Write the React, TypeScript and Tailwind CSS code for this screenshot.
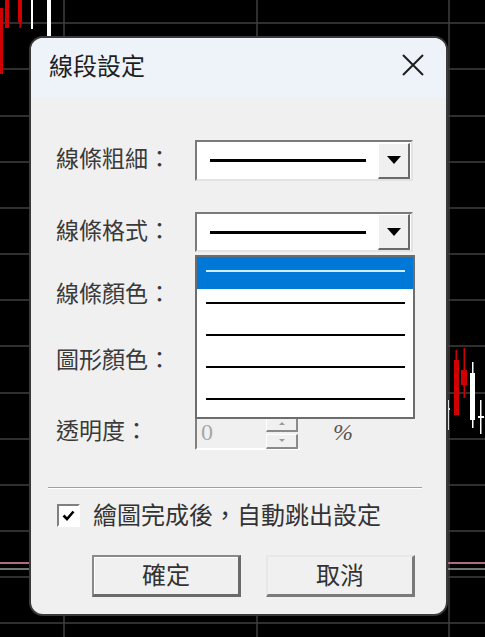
import React from "react";

const FONT = { fontFamily: '"Noto Sans CJK TC", "Noto Sans", sans-serif' };

// horizontal grid lines of the chart behind the dialog
const GRID_Y = [23, 69, 116, 162, 208, 254, 300, 346, 393, 439, 485, 531, 577, 623];
const GRID_X = [64, 257, 449];

function ChartBackground() {
    return (
        <svg className="absolute inset-0" width="485" height="637" viewBox="0 0 485 637">
            <rect width="485" height="637" fill="#000" />
            {GRID_Y.map(y => (
                <line key={y} x1="0" x2="485" y1={y} y2={y} stroke="#3f3f3f" strokeWidth="1.5" />
            ))}
            {GRID_X.map(x => (
                <line key={x} x1={x} x2={x} y1="0" y2="637" stroke="#3f3f3f" strokeWidth="1.5" />
            ))}
            <line x1="0" x2="485" y1="563" y2="563" stroke="#b06a85" strokeWidth="2" />
            <line x1="0" x2="485" y1="569" y2="569" stroke="#9a9a9a" strokeWidth="1.5" />
            {/* candles top-left */}
            <rect x="0" y="8" width="3" height="66" fill="#d00000" />
            <rect x="5" y="0" width="4" height="28" fill="#d00000" />
            <rect x="18" y="0" width="4" height="22" fill="#d00000" />
            <rect x="19.5" y="0" width="1.5" height="28" fill="#d00000" />
            <rect x="31" y="0" width="2" height="29" fill="#ffffff" />
            <rect x="47" y="0" width="4" height="40" fill="#ffffff" />
            {/* candles right */}
            <rect x="447" y="400" width="2" height="30" fill="#dddddd" />
            <rect x="444" y="408" width="6" height="2" fill="#dddddd" />
            <rect x="455.5" y="350" width="1.5" height="12" fill="#d00000" />
            <rect x="454" y="360" width="5" height="55" fill="#d00000" />
            <rect x="463.5" y="348" width="1.5" height="50" fill="#d00000" />
            <rect x="461" y="370" width="6" height="15" fill="#d00000" />
            <rect x="472" y="362" width="1.5" height="66" fill="#ffffff" />
            <rect x="470" y="373" width="5" height="47" fill="#ffffff" />
            <rect x="480" y="400" width="1.5" height="34" fill="#ffffff" />
            <rect x="478" y="416" width="6" height="2" fill="#ffffff" />
        </svg>
    );
}

function LineSample() {
    return <div className="h-[3px] w-[156px] bg-black" />;
}

function DropButton() {
    return (
        <div className="ml-auto flex h-[36px] w-[32px] items-center justify-center border-t border-l border-t-white border-l-white border-r-2 border-b-2 border-r-[#6a6a6a] border-b-[#6a6a6a] bg-[#f0f0f0]">
            <svg width="14" height="8" viewBox="0 0 14 8">
                <path d="M0 0h14L7 8z" fill="#000" />
            </svg>
        </div>
    );
}

function Combo() {
    return (
        <div className="flex h-full w-[218px] items-center border-t-2 border-l-2 border-t-[#7a7a7a] border-l-[#7a7a7a] border-b-2 border-r-2 border-b-[#e3e3e3] border-r-[#e3e3e3] bg-white pl-[13px] pr-[1px]">
            <LineSample />
            <DropButton />
        </div>
    );
}

function Label({ children }: { children: React.ReactNode }) {
    return <div className="w-[164px] shrink-0 pl-[25px] pb-[6px] text-[23px] leading-none text-[#3a3a3a]">{children}</div>;
}

export default function App() {
    return (
        <div className="relative h-[637px] w-[485px] overflow-hidden bg-black" style={FONT}>
            <ChartBackground />
            {/* dialog window */}
            <div className="absolute left-[31px] top-[38px] flex h-[576px] w-[415px] flex-col overflow-hidden rounded-[12px] bg-[#f0f0f0] shadow-[0_0_0_2px_#3a3a3a]">
                <div className="flex h-[59px] shrink-0 items-center justify-between bg-[#eef2f9] pb-[6px] pl-[18px] pr-[22px]">
                    <span className="text-[24px] leading-none text-[#1e1e1e]">線段設定</span>
                    <svg width="22" height="22" viewBox="0 0 22 22">
                        <path d="M1 1l20 20M21 1L1 21" stroke="#1e1e1e" strokeWidth="2" />
                    </svg>
                </div>
                <div className="relative flex flex-col pt-[43px]">
                    <div className="flex h-[41px] items-center">
                        <Label>線條粗細：</Label>
                        <Combo />
                    </div>
                    <div className="mt-[31px] flex h-[40px] items-center">
                        <Label>線條格式：</Label>
                        <Combo />
                    </div>
                    <div className="mt-[24px] flex h-[38px] items-center">
                        <Label>線條顏色：</Label>
                    </div>
                    <div className="mt-[28px] flex h-[38px] items-center">
                        <Label>圖形顏色：</Label>
                    </div>
                    <div className="mt-[34px] flex h-[36px] items-center">
                        <Label>透明度：</Label>
                        <div className="flex h-full w-[105px] items-center border-l-2 border-t-2 border-l-[#808080] border-t-[#808080] border-b-2 border-b-white bg-[#f0f0f0] pl-[4px]">
                            <span className="text-[24px] leading-none text-[#a8a8a8]" style={{ fontFamily: '"Liberation Serif", serif' }}>0</span>
                            <div className="ml-auto mr-[2px] flex flex-col gap-[2px]">
                                <div className="flex h-[16px] w-[32px] items-center justify-center border-t border-l border-t-white border-l-white border-r-2 border-b-2 border-r-[#8a8a8a] border-b-[#8a8a8a] bg-[#f0f0f0]">
                                    <svg width="6" height="3" viewBox="0 0 6 3"><path d="M0 3h6L3 0z" fill="#9a9a9a" /></svg>
                                </div>
                                <div className="flex h-[15px] w-[32px] items-center justify-center border-t border-l border-t-white border-l-white border-r-2 border-b-2 border-r-[#8a8a8a] border-b-[#8a8a8a] bg-[#f0f0f0]">
                                    <svg width="6" height="3" viewBox="0 0 6 3"><path d="M0 0h6L3 3z" fill="#9a9a9a" /></svg>
                                </div>
                            </div>
                        </div>
                        <span className="ml-[33px] text-[24px] italic leading-none text-[#555]" style={{ fontFamily: '"Liberation Serif", serif' }}>%</span>
                    </div>

                    {/* open list of line styles */}
                    <div className="absolute left-[164px] top-[158px] flex w-[220px] flex-col border-2 border-[#6d6d6d] bg-white">
                        {[0, 1, 2, 3, 4].map(i => (
                            <div key={i} className={`flex h-[32px] items-start pt-[13px] pl-[9px] ${i === 0 ? "bg-[#0078d7]" : ""}`}>
                                <div className={`h-[2px] w-[199px] ${i === 0 ? "bg-[#cdeffd]" : "bg-black"}`} />
                            </div>
                        ))}
                    </div>

                    <div className="ml-[17px] mr-[24px] mt-[37px] h-[2px] border-t border-t-[#a0a0a0] border-b border-b-white" />

                    <div className="mt-[14px] flex h-[24px] items-center pl-[26px]">
                        <div className="flex h-[23px] w-[23px] items-center justify-center border-t-2 border-l-2 border-t-[#808080] border-l-[#808080] border-b-2 border-r-2 border-b-white border-r-white bg-white">
                            <svg width="13" height="11" viewBox="0 0 13 11">
                                <path d="M1.5 5.5l3.5 3.5 6.5-7.5" stroke="#000" strokeWidth="2.6" fill="none" />
                            </svg>
                        </div>
                        <span className="ml-[13px] pb-[3px] text-[24px] leading-none text-[#333]">繪圖完成後，自動跳出設定</span>
                    </div>

                    <div className="mt-[28px] flex gap-[25px] pl-[61px]">
                        <button className="flex h-[42px] w-[149px] items-center justify-center border-t-2 border-l-2 border-t-[#8a8a8a] border-l-[#8a8a8a] border-b-[3px] border-r-[3px] border-b-[#6a6a6a] border-r-[#6a6a6a] bg-[#f0f0f0] pb-[4px] text-[24px] leading-none text-[#333] shadow-[inset_1px_1px_0_#ffffff]">
                            確定
                        </button>
                        <button className="flex h-[42px] w-[149px] items-center justify-center border-t-2 border-l-2 border-t-[#e8e8e8] border-l-[#e8e8e8] border-b-[3px] border-r-[3px] border-b-[#7a7a7a] border-r-[#7a7a7a] bg-[#f0f0f0] pb-[4px] text-[24px] leading-none text-[#333]">
                            取消
                        </button>
                    </div>
                </div>
            </div>
        </div>
    );
}
